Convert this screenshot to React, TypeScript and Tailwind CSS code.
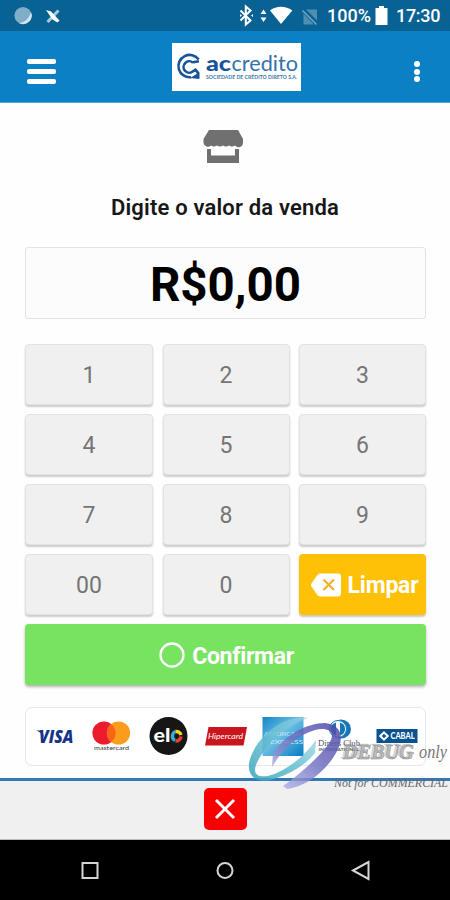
import React from "react";

const keyClass =
  "flex h-[61px] items-center justify-center rounded-[4px] border border-[#e2e2e2] bg-[#f0f0f0] pt-[4px] text-[23px] text-[#757575] shadow-[0_2px_2px_rgba(0,0,0,0.2)]";

function StatusBar() {
  return (
    <div className="flex h-[31px] items-center justify-between bg-[#086293] text-white">
      <svg width="70" height="31" viewBox="0 0 70 31">
        <circle cx="23" cy="15.5" r="8.6" fill="#7faec9" />
        <path d="M31 12a8.6 8.6 0 0 1-12 11c5 0 10-4 12-11z" fill="#d5e5ee" />
        <path d="M58.500 10.500L47.500 22" stroke="#a9cadb" strokeWidth="3" />
        <path d="M46 10l5 1.500 8.500 9-2 2-5-3z" fill="#fff" />
      </svg>
      <div className="flex h-[31px] items-center pr-[9px] font-medium">
        <svg width="88" height="31" viewBox="236 0 88 31">
          <path d="M240.5 10.5l10 10-4.7 4V6.5l4.7 4-10 10" fill="none" stroke="#fff" strokeWidth="2" />
          <path d="M240 14l2 1.5-2 1.5zM253 14l-2 1.5 2 1.5z" fill="#fff" />
          <path d="M260.5 14l3-4.5 3 4.5zM260.5 17.5h6l-3 4.5z" fill="#fff" />
          <path d="M270 10.5c6.5-5 15.5-5 22.3 0L281 24z" fill="#fff" />
          <path d="M306 9.500h11v11zM303.500 13.500l10.500 11h-10.500z" fill="#4f8eb1" />
          <path d="M302.500 10.500l14 14" stroke="#79a9c4" strokeWidth="1.4" />
        </svg>
        <span className="ml-[3px] w-[43px] whitespace-nowrap text-[18px] leading-[31px]">100%</span>
        <svg className="ml-[5px]" width="13" height="31" viewBox="0 0 13 31">
          <path d="M4 6h5v2h3.5v17H.5V8H4z" fill="#fff" />
        </svg>
        <span className="ml-[8px] w-[45px] whitespace-nowrap text-[18px] leading-[31px] tracking-[-0.3px]">17:30</span>
      </div>
    </div>
  );
}

function Brand() {
  return (
    <svg width="130" height="49" viewBox="171 42 130 49">
      <rect x="172" y="43" width="129" height="48" fill="#fff" />
      <g fill="none" stroke="#17549c" strokeWidth="2.6">
        <path d="M198.700 59.500A11.200 11.200 0 1 0 191 77.200" />
        <path d="M193 62.700A5.700 5.700 0 1 0 193 71.300M193 62.700q2.500-1.500 6-1.200M193 71.300l2.500-1.500 2.500 3V78" />
      </g>
      <path d="M190 78l9.300-5.500V79z" fill="#17549c" />
      <text x="206" y="71.300" fontFamily="Lato, sans-serif" fontSize="21" fontWeight="900" textLength="25" lengthAdjust="spacingAndGlyphs" fill="#17549c">ac</text>
      <text x="231.500" y="71.300" fontFamily="Lato, sans-serif" fontSize="21" fontWeight="400" textLength="66.500" lengthAdjust="spacingAndGlyphs" fill="#3273a9">credito</text>
      <text x="206" y="79" fontFamily="Lato, sans-serif" fontSize="4.7" fontWeight="700" textLength="91" lengthAdjust="spacingAndGlyphs" fill="#3f7aaa">
        SOCIEDADE DE CRÉDITO DIRETO S.A.
      </text>
    </svg>
  );
}

function Header() {
  return (
    <header className="grid h-[72px] grid-cols-[171px_130px_149px] items-start border-b border-[#55a7d5] bg-[#0b80c4]">
      <div className="ml-[27px] mt-[28px] flex w-[29px] flex-col gap-[5px]">
        <div className="h-[5px] rounded-[2px] bg-white" />
        <div className="h-[5px] rounded-[2px] bg-white" />
        <div className="h-[5px] rounded-[2px] bg-white" />
      </div>
      <div className="mt-[11px]">
        <Brand />
      </div>
      <div className="mr-[30px] mt-[30px] flex flex-col items-end gap-[1.5px]">
        <div className="size-[6px] rounded-full bg-white" />
        <div className="size-[6px] rounded-full bg-white" />
        <div className="size-[6px] rounded-full bg-white" />
      </div>
    </header>
  );
}

function CardBrands() {
  return (
    <svg className="block" width="399" height="57" viewBox="26 709 399 57">
      <text x="39" y="743.700" fontFamily="Open Sans, sans-serif" fontSize="17.5" fontWeight="800" fontStyle="italic" textLength="34.500" lengthAdjust="spacingAndGlyphs" fill="#17348b">VISA</text>
      <path d="M36.5 731.5h5.5l2.5 8c-1.5-3.5-4-6.5-8-8z" fill="#17348b" />
      <circle cx="104" cy="734" r="11.6" fill="#ed1b2e" />
      <circle cx="118.5" cy="734" r="11.6" fill="#fb9c1c" />
      <path d="M111.2 724.9a11.6 11.6 0 0 1 0 18.2 11.6 11.6 0 0 1 0-18.2z" fill="#f96418" />
      <text x="94" y="751.3" fontFamily="Lato, sans-serif" fontSize="6" textLength="35" lengthAdjust="spacingAndGlyphs" fill="#333">mastercard</text>
      <circle cx="168.5" cy="737" r="19" fill="#161616" />
      <text x="153.5" y="742.500" fontFamily="Lato, sans-serif" fontSize="18" fontWeight="900" fill="#fff" textLength="17" lengthAdjust="spacingAndGlyphs">el</text>
      <g fill="none" strokeWidth="3.4">
        <path d="M175.500 732.500a5 5 0 0 0-.5 9" stroke="#28aee0" />
        <path d="M175.500 732.500a5 5 0 0 1 5.500 3.500" stroke="#f5d51d" />
        <path d="M181 737.500a5 5 0 0 1-5.500 4.500" stroke="#e8402d" />
      </g>
      <path d="M208.5 728H247l-3.5 18.5H205z" fill="#cb151c" />
      <text x="208" y="740.2" fontFamily="Lato, sans-serif" fontSize="8.500" fontStyle="italic" textLength="35" lengthAdjust="spacingAndGlyphs" fill="#fff">Hipercard</text>
      <defs>
        <linearGradient id="amex" x1="0" x2="1" y1="0" y2="1">
          <stop offset="0" stopColor="#1484c9" />
          <stop offset=".45" stopColor="#6bbfe3" />
          <stop offset="1" stopColor="#087bc3" />
        </linearGradient>
      </defs>
      <rect x="262.5" y="718" width="41" height="39" fill="url(#amex)" />
      <text x="264" y="736.500" fontFamily="Lato, sans-serif" fontSize="6" textLength="37" lengthAdjust="spacingAndGlyphs" fill="#cdebf8">AMERICAN</text>
      <text x="270" y="744.5" fontFamily="Lato, sans-serif" fontSize="6" textLength="33" lengthAdjust="spacingAndGlyphs" fill="#cdebf8">EXPRESS</text>
      <ellipse cx="341" cy="730" rx="10" ry="9.500" fill="#1676b5" />
      <circle cx="338" cy="730" r="8.500" fill="#fff" stroke="#1784c3" strokeWidth="1" />
      <path d="M336 723.500v13a6.7 6.7 0 0 1 0-13zM340 723.500v13a6.700 6.700 0 0 0 0-13z" fill="#1676b5" />
      <text x="318" y="747" fontFamily="Liberation Serif, serif" fontSize="9" textLength="42" lengthAdjust="spacingAndGlyphs" fill="#46545d">Diners Club</text>
      <text x="318.5" y="752.3" fontFamily="Lato, sans-serif" fontSize="4" fontWeight="700" textLength="41" lengthAdjust="spacingAndGlyphs" fill="#52616a">INTERNATIONAL</text>
      <rect x="376.5" y="730" width="41" height="14" fill="#075291" />
      <path d="M384 733.4l3.8 3.6-3.8 3.6-3.8-3.6z" fill="none" stroke="#fff" strokeWidth="2" />
      <text x="390.5" y="740.3" fontFamily="Lato, sans-serif" fontSize="8.500" fontWeight="900" textLength="24" lengthAdjust="spacingAndGlyphs" fill="#fff">CABAL</text>
    </svg>
  );
}

function Watermark() {
  return (
    <svg className="pointer-events-none absolute left-[245px] top-[710px]" width="205" height="85" viewBox="245 710 205 85">
      <defs>
        <linearGradient id="teal" x1="0" x2="1" y1="1" y2="0">
          <stop offset="0" stopColor="#32a3b8" />
          <stop offset=".5" stopColor="#69bfd1" />
          <stop offset="1" stopColor="#96d5e4" stopOpacity=".7" />
        </linearGradient>
        <linearGradient id="violet" x1="1" x2="0" y1="0" y2="1">
          <stop offset="0" stopColor="#4b43a6" />
          <stop offset=".5" stopColor="#7475c3" />
          <stop offset="1" stopColor="#b4b7e5" stopOpacity=".85" />
        </linearGradient>
      </defs>
      <path d="M308 718C283 714 257 737 250 759C245 776 257 785 274 779C293 773 306 764 315 753L316 740C303 758 286 771 268 776C253 778 252 770 260 757C271 739 286 726 308 718Z" fill="url(#teal)" opacity=".85" />
      <path d="M272 767L273 753C285 735 307 723 325 723C343 725 344 739 336 753C324 774 304 787 287 789L283 786C300 774 318 758 328 745C338 731 327 727 315 730C297 735 282 750 272 767Z" fill="url(#violet)" opacity=".85" />
      <g fontFamily="Liberation Serif, serif" fontStyle="italic">
        <text x="343" y="759" fontSize="20" fontWeight="700" textLength="71" lengthAdjust="spacingAndGlyphs" className="[text-shadow:-2px_-1px_0_rgba(100,100,100,0.3)]" fill="#b4b4b4" stroke="#777" strokeWidth=".5" opacity=".85">DEBUG</text>
        <text x="419" y="758" fontSize="18" textLength="28" lengthAdjust="spacingAndGlyphs" fill="#777">only</text>
        <text x="334" y="786.5" fontSize="12" textLength="114" lengthAdjust="spacingAndGlyphs" fill="#686868">Not for COMMERCIAL</text>
      </g>
    </svg>
  );
}

export default function App() {
  return (
    <div className="relative flex h-[900px] w-[450px] flex-col overflow-hidden bg-[#fefefe] font-['Roboto',sans-serif]">
      <StatusBar />
      <Header />
      <main className="flex h-[675px] flex-col px-[25px] pt-[27px]">
        <svg className="ml-[178px] shrink-0" width="41" height="34" viewBox="203 130 41 34">
          <path d="M209 130h29l5 9v4a4.500 4.500 0 0 1-8 2.500q-3 2-6 0-3 2-6 0-3 2-6 0-3 2-6 0a4.500 4.500 0 0 1-7.500-2.500v-4z" fill="#707070" />
          <path d="M207 149h4v6.500h24V149h4v14h-32z" fill="#707070" />
        </svg>
        <h1 className="mt-[29px] h-[30px] whitespace-nowrap text-center text-[22px] font-semibold leading-[30px] tracking-[0.18px] text-[#171717]">Digite o valor da venda</h1>
        <div className="mt-[24px] flex h-[72px] w-[401px] shrink-0 items-center justify-center rounded-[3px] border border-[#e3e3e3] bg-[#fcfcfc] pt-[6px] text-[47.500px] font-bold leading-none text-black">R$0,00</div>
        <div className="mt-[25px] grid w-[401px] shrink-0 grid-cols-[128px_127px_127px] gap-x-[9.5px] gap-y-[9px]">
          {["1", "2", "3", "4", "5", "6", "7", "8", "9", "00", "0"].map((digit) => (
            <button key={digit} className={keyClass}>{digit}</button>
          ))}
          <button className="flex h-[61px] items-center justify-center gap-[6px] rounded-[4px] bg-[#ffc107] pl-[4px] text-[23px] font-bold text-white shadow-[0_2px_2px_rgba(0,0,0,0.22)]">
            <svg width="31" height="24" viewBox="0 0 31 24">
              <path d="M9 .5h18q3 0 3 3v17q0 3-3 3H9q-1.500 0-3-2L.5 13.500Q-.5 12 .5 10.500L6 2.500q1.500-2 3-2z" fill="#fff" />
              <path d="M12.500 6.500l10.500 10.500m0-10.500l-10.500 10.500" stroke="#f2b12a" strokeWidth="2.2" />
            </svg>
            <span className="pt-[3px] tracking-[-0.2px]">Limpar</span>
          </button>
        </div>
        <button className="mt-[9px] flex h-[61px] w-[401px] shrink-0 items-center justify-center gap-[7px] rounded-[4px] bg-[#78e360] pl-[2px] text-[23px] font-bold text-white shadow-[0_2px_3px_rgba(0,0,0,0.3)]">
          <svg width="26" height="26" viewBox="0 0 26 26"><circle cx="13" cy="13" r="11.500" fill="none" stroke="#fff" strokeWidth="2.300" /></svg>
          <span className="pt-[5px] tracking-[-0.3px]">Confirmar</span>
        </button>
        <div className="mt-[22px] h-[59px] w-[401px] shrink-0 overflow-hidden rounded-[7px] border border-[#e7e7e7] bg-white">
          <CardBrands />
        </div>
      </main>
      <footer className="flex h-[62px] items-start justify-center border-b border-[#bdbdbd] border-t-[3px] border-t-[#3279b8] bg-[#f0f0f0] pt-[7px]">
        <button className="flex h-[42px] w-[43px] items-center justify-center rounded-[5px] bg-[#f90000]">
          <svg width="24" height="24" viewBox="0 0 24 24"><path d="M3 3l18 18M21 3L3 21" stroke="#fff" strokeWidth="2.900" /></svg>
        </button>
      </footer>
      <nav className="flex h-[60px] justify-center bg-black">
        <svg width="290" height="60" viewBox="80 840 290 60" fill="none" stroke="#d5d5d5" strokeWidth="2">
          <path d="M82.500 863h15v15h-15z" />
          <circle cx="225" cy="870.500" r="7.500" />
          <path d="M353 870.500l15.500-8.500v17z" />
        </svg>
      </nav>
      <Watermark />
    </div>
  );
}
